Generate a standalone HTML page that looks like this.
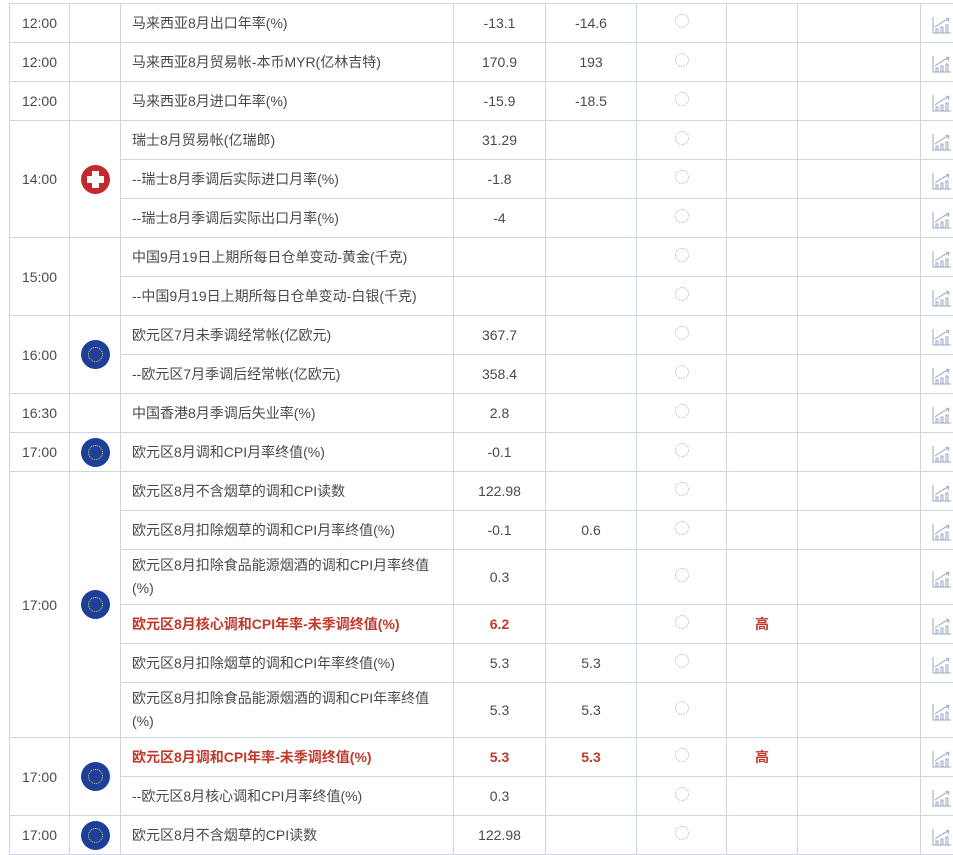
<!DOCTYPE html><html><head><meta charset="utf-8"><style>
body{margin:0;background:#fff;width:953px;height:852px;overflow:hidden;position:relative;font-family:"Liberation Sans","Noto Sans CJK SC",sans-serif;font-size:14px;color:#4a4a4a}
table{position:absolute;left:9px;top:3px;border-collapse:collapse;table-layout:fixed;width:1000px}
td{border:1px solid #cdd6e2;height:38px;padding:0;text-align:center;vertical-align:middle;line-height:18px}
td.e{text-align:left;padding-left:11px;padding-right:8px}
tr.t td{height:54px}
.r{color:#c0392b;font-weight:bold}
.flag{width:29px;height:29px;border-radius:50%;margin:0 auto;position:relative}
.eu{background:#1d3f99}
.eu:after{content:"";position:absolute;left:7px;top:7px;width:13px;height:13px;border-radius:50%;border:1px dotted #e8d44d}
.ch{background:#c4282e}
.ch:before{content:"";position:absolute;left:11px;top:6px;width:7px;height:17px;background:#fff}
.ch:after{content:"";position:absolute;left:6px;top:11px;width:17px;height:7px;background:#fff}
.ld{display:inline-block;width:12px;height:12px;border-radius:50%;border:1.5px dotted #aab5c6;margin-top:-10px}
.ic{text-align:left;padding-left:11px}
.ic svg{position:relative;top:4px}
</style></head><body>
<table>
<colgroup><col style="width:60px"><col style="width:51px"><col style="width:333px"><col style="width:92px"><col style="width:91px"><col style="width:90px"><col style="width:71px"><col style="width:123px"><col style="width:89px"></colgroup>
<tbody>
<tr><td>12:00</td><td></td><td class="e">马来西亚8月出口年率(%)</td><td>-13.1</td><td>-14.6</td><td><span class="ld"></span></td><td></td><td></td><td class="ic"><svg width="20" height="18" viewBox="0 0 20 18" fill="none" stroke="#9aa8c4" stroke-width="1"><path d="M1 1V17H19M4 17V13H6V17M9 17V11H11V17M14 17V9H16V17M3 11L12 5L17 3M14 2L17 3L16 6"/></svg></td></tr>
<tr><td>12:00</td><td></td><td class="e">马来西亚8月贸易帐-本币MYR(亿林吉特)</td><td>170.9</td><td>193</td><td><span class="ld"></span></td><td></td><td></td><td class="ic"><svg width="20" height="18" viewBox="0 0 20 18" fill="none" stroke="#9aa8c4" stroke-width="1"><path d="M1 1V17H19M4 17V13H6V17M9 17V11H11V17M14 17V9H16V17M3 11L12 5L17 3M14 2L17 3L16 6"/></svg></td></tr>
<tr><td>12:00</td><td></td><td class="e">马来西亚8月进口年率(%)</td><td>-15.9</td><td>-18.5</td><td><span class="ld"></span></td><td></td><td></td><td class="ic"><svg width="20" height="18" viewBox="0 0 20 18" fill="none" stroke="#9aa8c4" stroke-width="1"><path d="M1 1V17H19M4 17V13H6V17M9 17V11H11V17M14 17V9H16V17M3 11L12 5L17 3M14 2L17 3L16 6"/></svg></td></tr>
<tr><td rowspan="3">14:00</td><td rowspan="3"><div class="flag ch"></div></td><td class="e">瑞士8月贸易帐(亿瑞郎)</td><td>31.29</td><td></td><td><span class="ld"></span></td><td></td><td></td><td class="ic"><svg width="20" height="18" viewBox="0 0 20 18" fill="none" stroke="#9aa8c4" stroke-width="1"><path d="M1 1V17H19M4 17V13H6V17M9 17V11H11V17M14 17V9H16V17M3 11L12 5L17 3M14 2L17 3L16 6"/></svg></td></tr>
<tr><td class="e">--瑞士8月季调后实际进口月率(%)</td><td>-1.8</td><td></td><td><span class="ld"></span></td><td></td><td></td><td class="ic"><svg width="20" height="18" viewBox="0 0 20 18" fill="none" stroke="#9aa8c4" stroke-width="1"><path d="M1 1V17H19M4 17V13H6V17M9 17V11H11V17M14 17V9H16V17M3 11L12 5L17 3M14 2L17 3L16 6"/></svg></td></tr>
<tr><td class="e">--瑞士8月季调后实际出口月率(%)</td><td>-4</td><td></td><td><span class="ld"></span></td><td></td><td></td><td class="ic"><svg width="20" height="18" viewBox="0 0 20 18" fill="none" stroke="#9aa8c4" stroke-width="1"><path d="M1 1V17H19M4 17V13H6V17M9 17V11H11V17M14 17V9H16V17M3 11L12 5L17 3M14 2L17 3L16 6"/></svg></td></tr>
<tr><td rowspan="2">15:00</td><td rowspan="2"></td><td class="e">中国9月19日上期所每日仓单变动-黄金(千克)</td><td></td><td></td><td><span class="ld"></span></td><td></td><td></td><td class="ic"><svg width="20" height="18" viewBox="0 0 20 18" fill="none" stroke="#9aa8c4" stroke-width="1"><path d="M1 1V17H19M4 17V13H6V17M9 17V11H11V17M14 17V9H16V17M3 11L12 5L17 3M14 2L17 3L16 6"/></svg></td></tr>
<tr><td class="e">--中国9月19日上期所每日仓单变动-白银(千克)</td><td></td><td></td><td><span class="ld"></span></td><td></td><td></td><td class="ic"><svg width="20" height="18" viewBox="0 0 20 18" fill="none" stroke="#9aa8c4" stroke-width="1"><path d="M1 1V17H19M4 17V13H6V17M9 17V11H11V17M14 17V9H16V17M3 11L12 5L17 3M14 2L17 3L16 6"/></svg></td></tr>
<tr><td rowspan="2">16:00</td><td rowspan="2"><div class="flag eu"></div></td><td class="e">欧元区7月未季调经常帐(亿欧元)</td><td>367.7</td><td></td><td><span class="ld"></span></td><td></td><td></td><td class="ic"><svg width="20" height="18" viewBox="0 0 20 18" fill="none" stroke="#9aa8c4" stroke-width="1"><path d="M1 1V17H19M4 17V13H6V17M9 17V11H11V17M14 17V9H16V17M3 11L12 5L17 3M14 2L17 3L16 6"/></svg></td></tr>
<tr><td class="e">--欧元区7月季调后经常帐(亿欧元)</td><td>358.4</td><td></td><td><span class="ld"></span></td><td></td><td></td><td class="ic"><svg width="20" height="18" viewBox="0 0 20 18" fill="none" stroke="#9aa8c4" stroke-width="1"><path d="M1 1V17H19M4 17V13H6V17M9 17V11H11V17M14 17V9H16V17M3 11L12 5L17 3M14 2L17 3L16 6"/></svg></td></tr>
<tr><td>16:30</td><td></td><td class="e">中国香港8月季调后失业率(%)</td><td>2.8</td><td></td><td><span class="ld"></span></td><td></td><td></td><td class="ic"><svg width="20" height="18" viewBox="0 0 20 18" fill="none" stroke="#9aa8c4" stroke-width="1"><path d="M1 1V17H19M4 17V13H6V17M9 17V11H11V17M14 17V9H16V17M3 11L12 5L17 3M14 2L17 3L16 6"/></svg></td></tr>
<tr><td>17:00</td><td><div class="flag eu"></div></td><td class="e">欧元区8月调和CPI月率终值(%)</td><td>-0.1</td><td></td><td><span class="ld"></span></td><td></td><td></td><td class="ic"><svg width="20" height="18" viewBox="0 0 20 18" fill="none" stroke="#9aa8c4" stroke-width="1"><path d="M1 1V17H19M4 17V13H6V17M9 17V11H11V17M14 17V9H16V17M3 11L12 5L17 3M14 2L17 3L16 6"/></svg></td></tr>
<tr><td rowspan="6">17:00</td><td rowspan="6"><div class="flag eu"></div></td><td class="e">欧元区8月不含烟草的调和CPI读数</td><td>122.98</td><td></td><td><span class="ld"></span></td><td></td><td></td><td class="ic"><svg width="20" height="18" viewBox="0 0 20 18" fill="none" stroke="#9aa8c4" stroke-width="1"><path d="M1 1V17H19M4 17V13H6V17M9 17V11H11V17M14 17V9H16V17M3 11L12 5L17 3M14 2L17 3L16 6"/></svg></td></tr>
<tr><td class="e">欧元区8月扣除烟草的调和CPI月率终值(%)</td><td>-0.1</td><td>0.6</td><td><span class="ld"></span></td><td></td><td></td><td class="ic"><svg width="20" height="18" viewBox="0 0 20 18" fill="none" stroke="#9aa8c4" stroke-width="1"><path d="M1 1V17H19M4 17V13H6V17M9 17V11H11V17M14 17V9H16V17M3 11L12 5L17 3M14 2L17 3L16 6"/></svg></td></tr>
<tr class="t"><td class="e" style="line-height:23px">欧元区8月扣除食品能源烟酒的调和CPI月率终值(%)</td><td>0.3</td><td></td><td><span class="ld"></span></td><td></td><td></td><td class="ic"><svg width="20" height="18" viewBox="0 0 20 18" fill="none" stroke="#9aa8c4" stroke-width="1"><path d="M1 1V17H19M4 17V13H6V17M9 17V11H11V17M14 17V9H16V17M3 11L12 5L17 3M14 2L17 3L16 6"/></svg></td></tr>
<tr><td class="e r">欧元区8月核心调和CPI年率-未季调终值(%)</td><td class="r">6.2</td><td></td><td><span class="ld"></span></td><td class="r">高</td><td></td><td class="ic"><svg width="20" height="18" viewBox="0 0 20 18" fill="none" stroke="#9aa8c4" stroke-width="1"><path d="M1 1V17H19M4 17V13H6V17M9 17V11H11V17M14 17V9H16V17M3 11L12 5L17 3M14 2L17 3L16 6"/></svg></td></tr>
<tr><td class="e">欧元区8月扣除烟草的调和CPI年率终值(%)</td><td>5.3</td><td>5.3</td><td><span class="ld"></span></td><td></td><td></td><td class="ic"><svg width="20" height="18" viewBox="0 0 20 18" fill="none" stroke="#9aa8c4" stroke-width="1"><path d="M1 1V17H19M4 17V13H6V17M9 17V11H11V17M14 17V9H16V17M3 11L12 5L17 3M14 2L17 3L16 6"/></svg></td></tr>
<tr class="t"><td class="e" style="line-height:23px">欧元区8月扣除食品能源烟酒的调和CPI年率终值(%)</td><td>5.3</td><td>5.3</td><td><span class="ld"></span></td><td></td><td></td><td class="ic"><svg width="20" height="18" viewBox="0 0 20 18" fill="none" stroke="#9aa8c4" stroke-width="1"><path d="M1 1V17H19M4 17V13H6V17M9 17V11H11V17M14 17V9H16V17M3 11L12 5L17 3M14 2L17 3L16 6"/></svg></td></tr>
<tr><td rowspan="2">17:00</td><td rowspan="2"><div class="flag eu"></div></td><td class="e r">欧元区8月调和CPI年率-未季调终值(%)</td><td class="r">5.3</td><td class="r">5.3</td><td><span class="ld"></span></td><td class="r">高</td><td></td><td class="ic"><svg width="20" height="18" viewBox="0 0 20 18" fill="none" stroke="#9aa8c4" stroke-width="1"><path d="M1 1V17H19M4 17V13H6V17M9 17V11H11V17M14 17V9H16V17M3 11L12 5L17 3M14 2L17 3L16 6"/></svg></td></tr>
<tr><td class="e">--欧元区8月核心调和CPI月率终值(%)</td><td>0.3</td><td></td><td><span class="ld"></span></td><td></td><td></td><td class="ic"><svg width="20" height="18" viewBox="0 0 20 18" fill="none" stroke="#9aa8c4" stroke-width="1"><path d="M1 1V17H19M4 17V13H6V17M9 17V11H11V17M14 17V9H16V17M3 11L12 5L17 3M14 2L17 3L16 6"/></svg></td></tr>
<tr><td>17:00</td><td><div class="flag eu"></div></td><td class="e">欧元区8月不含烟草的CPI读数</td><td>122.98</td><td></td><td><span class="ld"></span></td><td></td><td></td><td class="ic"><svg width="20" height="18" viewBox="0 0 20 18" fill="none" stroke="#9aa8c4" stroke-width="1"><path d="M1 1V17H19M4 17V13H6V17M9 17V11H11V17M14 17V9H16V17M3 11L12 5L17 3M14 2L17 3L16 6"/></svg></td></tr>
</tbody></table>
</body></html>
